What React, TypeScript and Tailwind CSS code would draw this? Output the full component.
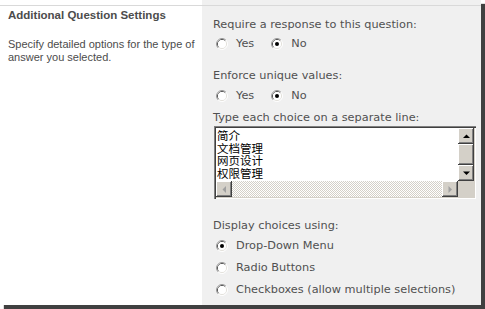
const bevel =
  'shadow-[inset_-1px_-1px_#404040,inset_1px_1px_#ffffff,inset_-2px_-2px_#808080,inset_2px_2px_#d4d0c8]';

function Radio({ checked }: { checked?: boolean }) {
  return (
    <svg width="12" height="12" viewBox="0 0 12 12" className="shrink-0">
      <path d="M2.11 9.89 A5.5 5.5 0 0 1 9.89 2.11" fill="none" stroke="#9a9a9a" strokeWidth="1" />
      <path d="M9.89 2.11 A5.5 5.5 0 0 1 2.11 9.89" fill="none" stroke="#ffffff" strokeWidth="1" />
      <path d="M2.82 9.18 A4.5 4.5 0 0 1 9.18 2.82" fill="none" stroke="#5a5a5a" strokeWidth="1" />
      <path d="M9.18 2.82 A4.5 4.5 0 0 1 2.82 9.18" fill="none" stroke="#e4e2dc" strokeWidth="1" />
      <circle cx="6" cy="6" r="4" fill="#ffffff" />
      {checked && <circle cx="6" cy="6" r="2" fill="#000000" />}
    </svg>
  );
}

function Option({ label, checked }: { label: string; checked?: boolean }) {
  return (
    <label className="flex items-center gap-[8px]">
      <Radio checked={checked} />
      <span>{label}</span>
    </label>
  );
}

function Arrow({ dir, disabled }: { dir: 'up' | 'down' | 'left' | 'right'; disabled?: boolean }) {
  const pts = {
    up: '1,5 4.5,1.5 8,5',
    down: '1,1.5 4.5,5 8,1.5',
    left: '5,1 1.5,4.5 5,8',
    right: '1.5,1 5,4.5 1.5,8',
  }[dir];
  const vertical = dir === 'up' || dir === 'down';
  return (
    <div className={`flex items-center justify-center bg-[#d4d0c8] ${bevel} w-[16px] h-[16px] shrink-0`}>
      <svg width={vertical ? 9 : 6} height={vertical ? 6 : 9} viewBox={vertical ? '0 0 9 6' : '0 0 6 9'}>
        <polygon points={pts} fill={disabled ? '#a0a0a0' : '#000000'} />
      </svg>
    </div>
  );
}

export default function App() {
  return (
    <div className="w-[485px] h-[309px] bg-white overflow-hidden">
      <div className="w-[481px] h-[305px] flex shadow-[4px_4px_1px_rgba(0,0,0,0.75)] font-['Liberation_Sans',sans-serif]">
        {/* left description column */}
        <div className="w-[202px] bg-white pt-[5px]">
          <div className="border-t border-[#d9d9d9] pl-[8px] pt-[2px] text-[#4c4c4c]">
            <h2 className="text-[11.5px] font-bold leading-[14px]">Additional Question Settings</h2>
            <p className="mt-[16px] text-[11px] leading-[13px] pr-[4px]">
              Specify detailed options for the type of answer you selected.
            </p>
          </div>
        </div>

        {/* right settings column */}
        <div className="flex-1 bg-[#f0f0f0] pt-[5px]">
          <div className="border-t border-[#d9d9d9] pl-[11px] pt-[12px] text-[11.3px] leading-[13px] text-[#505050] font-['DejaVu_Sans',sans-serif]">
            <div>Require a response to this question:</div>
            <div className="flex gap-[17px] mt-[6px] pl-[3px]">
              <Option label="Yes" />
              <Option label="No" checked />
            </div>

            <div className="mt-[19px]">Enforce unique values:</div>
            <div className="flex gap-[17px] mt-[7px] pl-[3px]">
              <Option label="Yes" />
              <Option label="No" checked />
            </div>

            <div className="mt-[9px]">Type each choice on a separate line:</div>
            <div className="mt-[2px] ml-[1px] w-[262px] h-[73px] flex flex-col bg-white shadow-[inset_1px_1px_#808080,inset_2px_2px_#404040,inset_-1px_-1px_#ffffff,inset_-2px_-2px_#d4d0c8] p-[2px]">
              <div className="flex flex-1 min-h-0">
                <div className="flex-1 pl-[1px] pt-[2px] text-[11.5px] leading-[12.5px] text-black font-['Liberation_Sans','Noto_Sans_CJK_SC',sans-serif]">
                  <div>简介</div>
                  <div>文档管理</div>
                  <div>网页设计</div>
                  <div>权限管理</div>
                </div>
                <div className="w-[16px] flex flex-col bg-[#d4d0c8]">
                  <Arrow dir="up" />
                  <div className={`h-[21px] bg-[#d4d0c8] ${bevel}`} />
                  <div className="flex-1" />
                  <Arrow dir="down" />
                </div>
              </div>
              <div className="flex h-[16px]">
                <Arrow dir="left" disabled />
                <div className="flex-1 [background-image:repeating-conic-gradient(#d4d0c8_0%_25%,#ffffff_0%_50%)] [background-size:2px_2px]" />
                <Arrow dir="right" disabled />
                <div className="w-[16px] bg-[#d4d0c8]" />
              </div>
            </div>

            <div className="mt-[20px]">Display choices using:</div>
            <div className="mt-[7px] pl-[3px] flex flex-col gap-[9px]">
              <Option label="Drop-Down Menu" checked />
              <Option label="Radio Buttons" />
              <Option label="Checkboxes (allow multiple selections)" />
            </div>
          </div>
        </div>
      </div>
    </div>
  );
}
